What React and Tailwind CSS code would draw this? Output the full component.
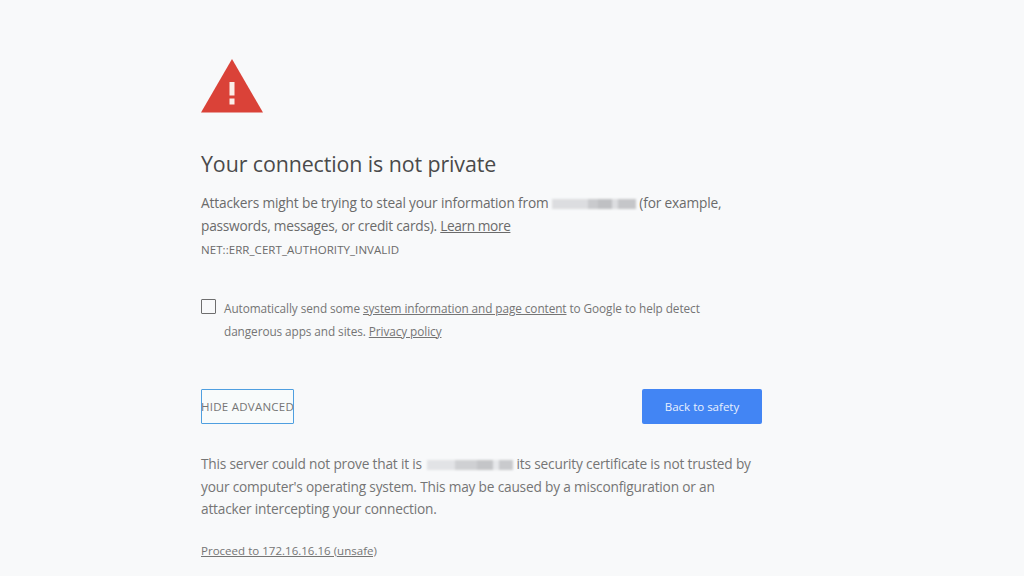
const font = { fontFamily: '"Open Sans", "Noto Sans", sans-serif' }

function Redacted({ cells, className }) {
  return (
    <span className={`inline-flex h-[10px] align-[-1px] blur-[1px] ${className}`}>
      {cells.map(([w, c], i) => (
        <span key={i} className={`h-full ${w} ${c}`} />
      ))}
    </span>
  )
}

export default function App() {
  return (
    <div style={font} className="h-[576px] w-[1024px] overflow-hidden bg-[#f8f9fa] pl-[201px] pt-[59px] text-[#6b6b6b]">
      <div className="w-[561px]">
        <svg width="62" height="54" viewBox="0 0 62 54" className="block">
          <path d="M31 0 L62 53.5 H0 Z" fill="#da4238" />
          <rect x="28.5" y="23" width="5" height="13.5" fill="#fbeee9" />
          <rect x="28.5" y="39.5" width="5" height="6" fill="#fbeee9" />
        </svg>

        <h1 className="mt-[36px] text-[21.4px] leading-[30px] tracking-[-0.1px] text-[#4a4a4a]">Your connection is not private</h1>

        <p className="mt-[13px] text-[13.7px] leading-[22.5px] tracking-[-0.16px]">
          Attackers might be trying to steal your information from{' '}
          <Redacted
            className="w-[84px]"
            cells={[
              ['w-[36px]', 'bg-[#dcdde0]'],
              ['w-[10px]', 'bg-[#c9cacd]'],
              ['w-[14px]', 'bg-[#bfc0c3]'],
              ['w-[6px]', 'bg-[#dcdde0]'],
              ['w-[18px]', 'bg-[#c5c6c9]'],
            ]}
          />{' '}
          (for example, <span className="tracking-[-0.24px]">passwords, messages, or credit cards).</span>{' '}
          <span className="underline tracking-[-0.4px]">Learn more</span>
        </p>
        <p className="text-[11.5px] leading-[25px] tracking-[0.06px]">NET::ERR_CERT_AUTHORITY_INVALID</p>

        <div className="mt-[35px] flex items-start gap-[8px]">
          <span className="mt-[2px] h-[15px] w-[15px] shrink-0 rounded-[1px] border border-[#6e6e6e]" />
          <p className="w-[500px] text-[11.8px] leading-[22.5px] tracking-[-0.08px] text-[#757575]">
            Automatically send some <span className="underline">system information and page content</span> to Google to help detect dangerous apps and sites.{' '}
            <span className="underline">Privacy policy</span>
          </p>
        </div>

        <div className="mt-[47px] flex items-center justify-between">
          <button className="flex h-[35px] w-[93px] items-center overflow-hidden whitespace-nowrap rounded-[1px] border border-[#4f9fe0] bg-[#f8fbfb] text-[11.5px] tracking-[0.25px] text-[#757575]">
            <span className="-ml-px">HIDE ADVANCED</span>
          </button>
          <button className="h-[35px] w-[120px] rounded-[2px] bg-[#4285f4] text-[11.5px] text-[#e8f0fe]">Back to safety</button>
        </div>

        <p className="mt-[29px] text-[13.7px] leading-[22.5px] tracking-[-0.19px] text-[#757575]">
          This server could not prove that it is{' '}
          <Redacted
            className="ml-[2px] w-[86px]"
            cells={[
              ['w-[28px]', 'bg-[#e2e3e6]'],
              ['w-[22px]', 'bg-[#cfd0d3]'],
              ['w-[16px]', 'bg-[#c4c5c8]'],
              ['w-[6px]', 'bg-[#e6e7ea]'],
              ['w-[14px]', 'bg-[#c9cacd]'],
            ]}
          />{' '}
          its security certificate is not trusted by your computer's operating system. This may be caused by a misconfiguration or an attacker intercepting your connection.
        </p>

        <p className="mt-[18px] text-[11.5px] leading-[23px] tracking-[0.02px] text-[#757575]">
          <span className="underline">Proceed to 172.16.16.16 (unsafe)</span>
        </p>
      </div>
    </div>
  )
}
